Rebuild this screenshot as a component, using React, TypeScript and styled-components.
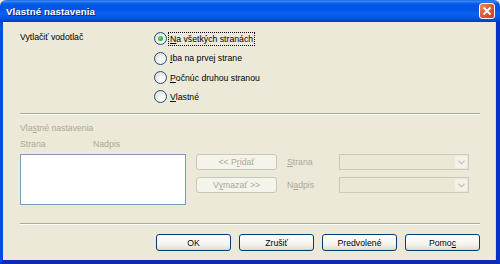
import styled, { createGlobalStyle } from "styled-components";

const Global = createGlobalStyle`
  html, body {
    margin: 0;
    padding: 0;
    width: 500px;
    height: 264px;
    overflow: hidden;
    background: #ece9d8;
  }
`;

const Window = styled.div`
  width: 500px;
  height: 264px;
  display: flex;
  flex-direction: column;
  font-family: "Liberation Sans", Arial, sans-serif;
  font-size: 8.7px;
  color: #000;
`;

const TitleBar = styled.div`
  height: 22px;
  flex: none;
  display: flex;
  align-items: center;
  justify-content: space-between;
  padding: 0 5px 0 6px;
  box-sizing: border-box;
  border-radius: 6px 6px 0 0;
  background: linear-gradient(
    to bottom,
    #0a5be0 0,
    #3d8df5 1px,
    #2a79f0 2px,
    #0058e6 4px,
    #0054e3 9px,
    #0a62f2 13px,
    #0559eb 17px,
    #0048d2 20px,
    #003cb8 22px
  );
`;

const Title = styled.span`
  color: #fff;
  font-weight: bold;
  font-size: 9.7px;
  letter-spacing: 0.1px;
  padding-top: 1px;
  text-shadow: 1px 1px 0 #0a1e8c;
`;

const CloseButton = styled.div`
  width: 16px;
  height: 16px;
  box-sizing: border-box;
  border: 1px solid #fff;
  border-radius: 3px;
  background: linear-gradient(135deg, #ee8a6a 0%, #e35c38 45%, #c8401e 100%);
  display: flex;
  align-items: center;
  justify-content: center;
`;

const Frame = styled.div`
  flex: 1;
  display: flex;
  flex-direction: column;
  border-left: 3px solid #0a4ae0;
  border-right: 4px solid #0732c8;
  border-bottom: 4px solid #0a2bb8;
  background: #ece9d8;
  box-shadow: inset -1px 0 0 #dcd9c6;
`;

const Client = styled.div`
  flex: 1;
  display: flex;
  flex-direction: column;
  padding: 0 16px 0 17px;
`;

const WatermarkRow = styled.div`
  display: flex;
  padding-top: 7.35px;
`;

const FieldLabel = styled.div`
  width: 134px;
  height: 19.3px;
  line-height: 17px;
`;

const RadioList = styled.div`
  display: flex;
  flex-direction: column;
`;

const RadioRow = styled.label`
  height: 19.3px;
  display: flex;
  align-items: center;
  gap: 1px;
`;

const RadioCircle = styled.span<{ $checked?: boolean }>`
  width: 13px;
  height: 13px;
  box-sizing: border-box;
  border-radius: 50%;
  border: 1px solid #1c5180;
  background: radial-gradient(circle at 65% 65%, #ffffff 0%, #f2f1ec 40%, #d4d2c8 100%);
  display: flex;
  align-items: center;
  justify-content: center;
  &::after {
    content: "";
    display: ${(p) => (p.$checked ? "block" : "none")};
    width: 5px;
    height: 5px;
    border-radius: 50%;
    background: radial-gradient(circle at 40% 40%, #7be07a 0%, #2fae2d 60%, #1c8e1b 100%);
  }
`;

const RadioText = styled.span<{ $focused?: boolean }>`
  padding: 1px 1px;
  line-height: 10px;
  border: 1px dotted ${(p) => (p.$focused ? "#000" : "transparent")};
`;

const Acc = styled.span`
  text-decoration: underline;
`;

const Separator = styled.div<{ $top: number }>`
  margin-top: ${(p) => p.$top}px;
  height: 0;
  border-top: 1px solid #aca899;
  border-bottom: 1px solid #fff;
`;

const Disabled = styled.div`
  color: #aca899;
  line-height: 13px;
`;

const GroupTitle = styled(Disabled)`
  margin-top: 6.5px;
`;

const Headings = styled(Disabled)`
  display: flex;
  margin-top: 3px;
  margin-bottom: 3.5px;
`;

const HeadingCell = styled.span<{ $w: number }>`
  width: ${(p) => p.$w}px;
`;

const EditRow = styled.div`
  display: flex;
  gap: 10px;
`;

const ListBox = styled.div`
  width: 166px;
  height: 51px;
  box-sizing: border-box;
  border: 1px solid #7f9db9;
  background: #fff;
`;

const Stack = styled.div`
  display: flex;
  flex-direction: column;
  gap: 7px;
`;

const DisabledButton = styled.div`
  width: 81px;
  height: 16px;
  box-sizing: border-box;
  border: 1px solid #c9c7ba;
  border-radius: 3px;
  background: #f5f4ea;
  color: #aca899;
  display: flex;
  align-items: center;
  justify-content: center;
`;

const ComboRow = styled.div`
  display: flex;
  align-items: center;
  height: 16px;
`;

const ComboLabel = styled.span`
  width: 52px;
  color: #aca899;
`;

const Combo = styled.div`
  width: 130px;
  height: 16px;
  box-sizing: border-box;
  border: 1px solid #cdcabb;
  background: #ebe8d6;
  display: flex;
  justify-content: flex-end;
  padding: 1px;
`;

const ComboArrow = styled.div`
  width: 12px;
  background: #f3f2ea;
  border-radius: 1px;
  display: flex;
  align-items: center;
  justify-content: center;
`;

const ButtonBar = styled.div`
  display: flex;
  justify-content: flex-end;
  gap: 8px;
  margin-top: 9px;
  padding-right: 0;
`;

const Button = styled.div`
  width: 75px;
  height: 17px;
  box-sizing: border-box;
  border: 1px solid #003c74;
  border-radius: 3px;
  background: linear-gradient(to bottom, #ffffff 0%, #f4f4f0 60%, #e6e3d8 90%, #d6d0c5 100%);
  display: flex;
  align-items: center;
  justify-content: center;
`;

const radios = [
  { label: "a všetkých stranách", acc: "N", checked: true },
  { label: "ba na prvej strane", acc: "I" },
  { label: "očnúc druhou stranou", acc: "P" },
  { label: "lastné", acc: "V" },
];

function Chevron() {
  return (
    <svg width="7" height="5" viewBox="0 0 7 5">
      <path d="M0.5 0.8 L3.5 3.8 L6.5 0.8" fill="none" stroke="#c9c7ba" strokeWidth="1.4" />
    </svg>
  );
}

function App() {
  return (
    <Window>
      <Global />
      <TitleBar>
        <Title>Vlastné nastavenia</Title>
        <CloseButton>
          <svg width="10" height="10" viewBox="0 0 10 10">
            <path d="M1.5 1.5 L8.5 8.5 M8.5 1.5 L1.5 8.5" stroke="#fff" strokeWidth="2" />
          </svg>
        </CloseButton>
      </TitleBar>
      <Frame>
        <Client>
          <WatermarkRow>
            <FieldLabel>Vytlačiť vodotlač</FieldLabel>
            <RadioList>
              {radios.map((r) => (
                <RadioRow key={r.acc}>
                  <RadioCircle $checked={r.checked} />
                  <RadioText $focused={r.checked}>
                    <Acc>{r.acc}</Acc>
                    {r.label}
                  </RadioText>
                </RadioRow>
              ))}
            </RadioList>
          </WatermarkRow>

          <Separator $top={6.5} />

          <GroupTitle>
            Vla<Acc>s</Acc>tné nastavenia
          </GroupTitle>
          <Headings>
            <HeadingCell $w={73}>Strana</HeadingCell>
            <HeadingCell $w={60}>Nadpis</HeadingCell>
          </Headings>

          <EditRow>
            <ListBox />
            <Stack>
              <DisabledButton>&lt;&lt; P<Acc>r</Acc>idať</DisabledButton>
              <DisabledButton>V<Acc>y</Acc>mazať &gt;&gt;</DisabledButton>
            </Stack>
            <Stack>
              <ComboRow>
                <ComboLabel><Acc>S</Acc>trana</ComboLabel>
                <Combo>
                  <ComboArrow><Chevron /></ComboArrow>
                </Combo>
              </ComboRow>
              <ComboRow>
                <ComboLabel>N<Acc>a</Acc>dpis</ComboLabel>
                <Combo>
                  <ComboArrow><Chevron /></ComboArrow>
                </Combo>
              </ComboRow>
            </Stack>
          </EditRow>

          <Separator $top={18} />

          <ButtonBar>
            <Button>OK</Button>
            <Button>Zrušiť</Button>
            <Button>Predvolené</Button>
            <Button>Pomo<Acc>c</Acc></Button>
          </ButtonBar>
        </Client>
      </Frame>
    </Window>
  );
}

export default App;
